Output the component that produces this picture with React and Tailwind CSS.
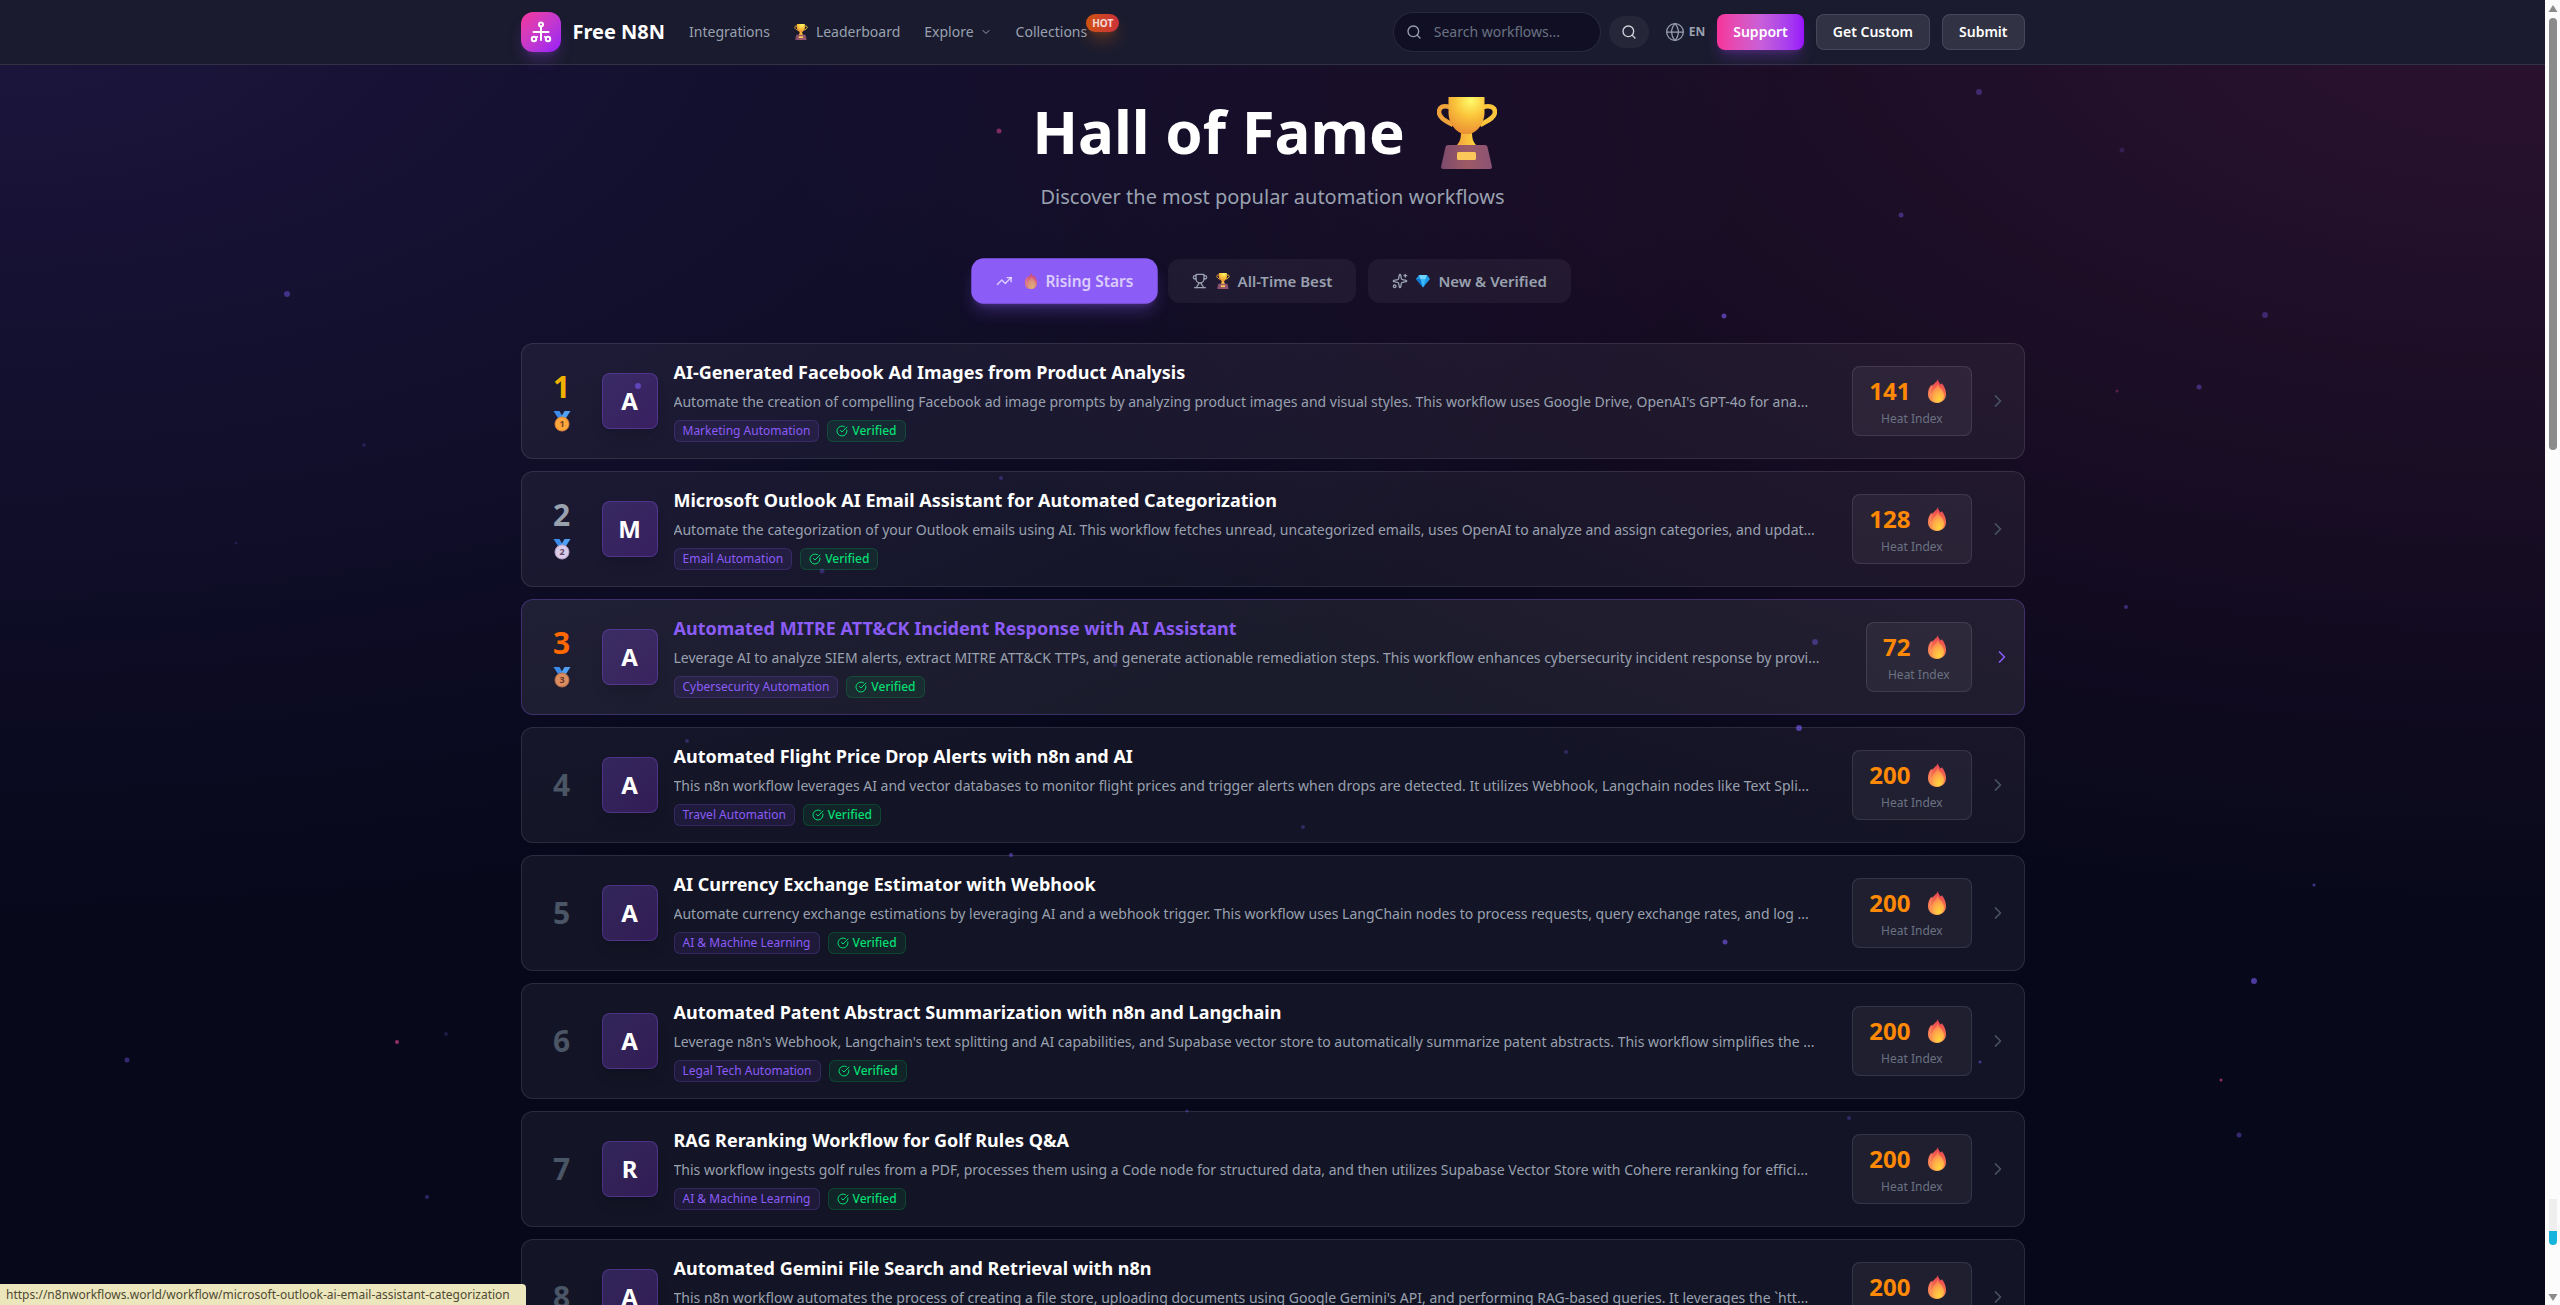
import { Search, Globe, ChevronDown, ChevronRight, TrendingUp, Trophy, Sparkles, CircleCheckBig } from 'lucide-react'

const workflows = [
  {
    title: 'AI-Generated Facebook Ad Images from Product Analysis',
    description: "Automate the creation of compelling Facebook ad image prompts by analyzing product images and visual styles. This workflow uses Google Drive, OpenAI's GPT-4o for ana...",
    category: 'Marketing Automation',
    heat: 141,
  },
  {
    title: 'Microsoft Outlook AI Email Assistant for Automated Categorization',
    description: 'Automate the categorization of your Outlook emails using AI. This workflow fetches unread, uncategorized emails, uses OpenAI to analyze and assign categories, and updat...',
    category: 'Email Automation',
    heat: 128,
  },
  {
    title: 'Automated MITRE ATT&CK Incident Response with AI Assistant',
    description: 'Leverage AI to analyze SIEM alerts, extract MITRE ATT&CK TTPs, and generate actionable remediation steps. This workflow enhances cybersecurity incident response by provi...',
    category: 'Cybersecurity Automation',
    heat: 72,
    active: true,
  },
  {
    title: 'Automated Flight Price Drop Alerts with n8n and AI',
    description: 'This n8n workflow leverages AI and vector databases to monitor flight prices and trigger alerts when drops are detected. It utilizes Webhook, Langchain nodes like Text Spli...',
    category: 'Travel Automation',
    heat: 200,
  },
  {
    title: 'AI Currency Exchange Estimator with Webhook',
    description: 'Automate currency exchange estimations by leveraging AI and a webhook trigger. This workflow uses LangChain nodes to process requests, query exchange rates, and log ...',
    category: 'AI & Machine Learning',
    heat: 200,
  },
  {
    title: 'Automated Patent Abstract Summarization with n8n and Langchain',
    description: "Leverage n8n's Webhook, Langchain's text splitting and AI capabilities, and Supabase vector store to automatically summarize patent abstracts. This workflow simplifies the ...",
    category: 'Legal Tech Automation',
    heat: 200,
  },
  {
    title: 'RAG Reranking Workflow for Golf Rules Q&A',
    description: 'This workflow ingests golf rules from a PDF, processes them using a Code node for structured data, and then utilizes Supabase Vector Store with Cohere reranking for effici...',
    category: 'AI & Machine Learning',
    heat: 200,
  },
  {
    title: 'Automated Gemini File Search and Retrieval with n8n',
    description: "This n8n workflow automates the process of creating a file store, uploading documents using Google Gemini's API, and performing RAG-based queries. It leverages the `htt...",
    category: 'AI & Machine Learning',
    heat: 200,
  },
]

const rankColors = ['text-[#f0b100]', 'text-[#99a1af]', 'text-[#ff6900]']

const medals = [
  { fill: '#fca63c', rim: '#e0853a', ink: '#7a3f22' },
  { fill: '#dccbe8', rim: '#b9a5c9', ink: '#5d4a6d' },
  { fill: '#d98d60', rim: '#b56d48', ink: '#6b3626' },
]

// x, y, radius, opacity, pink?
const particles = [
  [287, 294, 3, 0.45], [236, 543, 1.5, 0.2], [364, 445, 2, 0.2], [397, 1042, 2, 0.6, true],
  [446, 1034, 2, 0.2], [127, 1060, 2.5, 0.4], [427, 1197, 2, 0.35], [2122, 150, 2.5, 0.2],
  [2265, 315, 3, 0.35], [2199, 387, 2.5, 0.4], [2117, 391, 1.5, 0.3, true], [2126, 607, 2, 0.4],
  [2314, 885, 1.5, 0.5], [2254, 981, 3, 0.6], [2221, 1080, 1.5, 0.6, true], [2239, 1135, 2.5, 0.4],
  [999, 131, 2.5, 0.5, true], [1979, 92, 3, 0.35], [1901, 215, 2.5, 0.4], [1724, 316, 2.5, 0.6],
  [638, 386, 3, 0.6], [1001, 478, 2, 0.3], [822, 571, 2.5, 0.3], [1815, 642, 3, 0.4],
  [1115, 665, 2, 0.3], [1799, 728, 3, 0.6], [1566, 752, 2, 0.3], [1303, 827, 2, 0.3],
  [1011, 855, 2, 0.5], [1725, 942, 2.5, 0.6], [1980, 1062, 1.5, 0.5], [1187, 1111, 1.5, 0.4],
  [1849, 1118, 2, 0.3], [687, 741, 2, 0.3],
]

function TrophyArt({ className }) {
  return (
    <svg viewBox="0 0 60 72" className={className} aria-hidden="true">
      <defs>
        <radialGradient id="cup" cx="0.62" cy="0.1" r="0.95">
          <stop offset="0" stopColor="#fffb6b" />
          <stop offset="0.45" stopColor="#fbc53b" />
          <stop offset="1" stopColor="#e88a33" />
        </radialGradient>
        <linearGradient id="stem" x1="0" x2="1">
          <stop offset="0" stopColor="#f2a23a" />
          <stop offset="1" stopColor="#ffd640" />
        </linearGradient>
        <linearGradient id="base" x1="0" x2="1">
          <stop offset="0" stopColor="#7d4a6d" />
          <stop offset="0.5" stopColor="#9c5a66" />
          <stop offset="1" stopColor="#8c5374" />
        </linearGradient>
      </defs>
      <path d="M13 10C6 8 2 10 2 15c0 6 7 9 14 13" fill="none" stroke="#f0a33b" strokeWidth="4.5" />
      <path d="M46 10c7-2 12 0 12 5 0 6-8 9-15 13" fill="none" stroke="#fcc63c" strokeWidth="4.5" />
      <path d="M24 34h11c0 8 1 11 5 15H19c4-4 5-7 5-15z" fill="url(#stem)" />
      <path d="M11.500 0h36v16c0 9-6 18-14 21h-8c-8-3-14-12-14-21z" fill="url(#cup)" />
      <path d="M11 48h37q2 0 2.500 2l4.500 20q0 2-2 2H6q-2 0-2-2l4.500-20q.5-2 2.500-2z" fill="url(#base)" />
      <rect x="20" y="55" width="19" height="8" rx="1.500" fill="#fbc65a" />
    </svg>
  )
}

function FireArt({ className }) {
  return (
    <svg viewBox="0 0 18 24" className={className} aria-hidden="true">
      <defs>
        <linearGradient id="flame" x1="0.6" y1="0" x2="0.4" y2="1">
          <stop offset="0" stopColor="#e23b53" />
          <stop offset="0.5" stopColor="#f76f4e" />
          <stop offset="1" stopColor="#fb9a52" />
        </linearGradient>
        <radialGradient id="ember" cx="0.62" cy="0.85" r="0.75">
          <stop offset="0" stopColor="#ffd53e" />
          <stop offset="0.6" stopColor="#ffab4a" />
          <stop offset="1" stopColor="#fd7f50" />
        </radialGradient>
      </defs>
      <path d="M10 0c0 2 1 3.500 2.500 5.500C14 4.800 13.800 4 13.800 4 16 7 18 10.500 18 15c0 5.500-4 9-9 9s-9-3.500-9-9c0-4 1-6.500 3.500-9.500 0 1 .2 1.500.5 2C6 4 9 3 10 0z" fill="url(#flame)" />
      <path d="M9.500 5c1 3.500 6.500 6 6.500 11.500 0 4.500-2.800 7-6.500 7S3 21 3 17c0-6 5.500-7 6.500-12z" fill="url(#ember)" />
      <path d="M4.500 6C2 10 1.500 14 3 18" fill="none" stroke="#ffa08a" strokeWidth="0.6" />
    </svg>
  )
}

function GemArt() {
  return (
    <svg viewBox="0 0 14 14" className="size-3.5" aria-hidden="true">
      <path d="M3 1h8l3 4-7 8.500L0 5z" fill="#1f9bea" />
      <path d="M3 1h8l-1.500 4h-5z" fill="#6fd6ff" />
      <path d="M0 5h4.500L7 13.500z" fill="#1273cf" />
      <path d="M4.500 5h5L7 13.500z" fill="#3ab9fa" />
    </svg>
  )
}

function MedalArt({ place }) {
  const medal = medals[place - 1]
  return (
    <svg viewBox="0 0 20 24" className="h-6 w-5" aria-hidden="true">
      <path d="M1.500 2h6l4 7H6z" fill="#3b8bea" />
      <path d="M18.500 2h-6l-4 7H14z" fill="#4f9ff5" />
      <circle cx="10" cy="15" r="7" fill={medal.fill} stroke={medal.rim} />
      <text x="10" y="18" textAnchor="middle" fontSize="9" fontWeight="700" fill={medal.ink}>{place}</text>
    </svg>
  )
}

function Logo() {
  return (
    <span className="flex size-10 items-center justify-center rounded-xl bg-linear-to-br from-[#f6339a] to-[#9810fa] shadow-lg shadow-[#ad46ff]/25">
      <svg viewBox="0 0 24 24" className="size-6" fill="none" stroke="#fff" strokeWidth="2" aria-hidden="true">
        <circle cx="12" cy="4.500" r="2" />
        <path d="M12 6.500V20M4.500 12h15" strokeLinecap="round" />
        <circle cx="5" cy="19" r="2.200" />
        <circle cx="19" cy="19" r="2.200" />
        <path d="M7 17.500 9 16.500M17 17.500 15 16.500" strokeWidth="1.500" />
      </svg>
    </span>
  )
}

function Header() {
  return (
    <header className="relative shrink-0 border-b border-white/10 bg-[#1a1b2e]">
      <div className="mx-auto flex h-16 max-w-[1536px] items-center justify-between px-4">
        <div className="flex items-center gap-6 text-sm text-[#99a1af]">
          <a href="#home" className="flex items-center gap-3">
            <Logo />
            <span className="text-xl font-bold text-white">Free N8N</span>
          </a>
          <nav className="flex items-center gap-6">
            <a href="#integrations">Integrations</a>
            <a href="#leaderboard" className="flex items-center gap-2">
              <TrophyArt className="h-4 w-3.5" />
              Leaderboard
            </a>
            <button type="button" className="flex items-center gap-1.5">
              Explore
              <ChevronDown className="size-3" />
            </button>
            <a href="#collections" className="relative">
              Collections
              <span className="absolute -top-2 -right-8 rounded-full bg-linear-to-r from-[#cf5209] to-[#cc3038] px-1.5 py-0.5 text-[10px] leading-[14px] font-bold text-white/80 shadow-lg shadow-[#ff6900]/30">
                HOT
              </span>
            </a>
          </nav>
        </div>
        <div className="flex items-center gap-3">
          <form className="flex items-center gap-2">
            <div className="flex h-10 w-52 items-center gap-3 rounded-full border border-white/10 bg-[#110f24] px-3">
              <Search className="size-4 shrink-0 text-[#99a1af]" />
              <input
                type="text"
                aria-label="Search workflows"
                placeholder="Search workflows..."
                className="w-full bg-transparent text-sm text-white outline-none placeholder:text-[#6a7282]"
              />
            </div>
            <button type="submit" aria-label="Search" className="flex h-8 w-10 items-center justify-center rounded-full bg-white/5">
              <Search className="size-4 text-[#d1d5dc]" />
            </button>
          </form>
          <button type="button" className="flex items-center gap-1 pl-1 text-xs font-bold text-[#99a1af]">
            <Globe className="size-5" strokeWidth={1.5} />
            EN
          </button>
          <button type="button" className="h-9 rounded-lg bg-linear-to-r from-[#f6339a] via-[#c95fd8] to-[#9810fa] px-4 text-sm font-semibold text-white shadow-lg shadow-[#ad46ff]/25">
            Support
          </button>
          <button type="button" className="h-9 rounded-lg border border-white/10 bg-white/10 px-4 text-sm font-semibold text-white">
            Get Custom
          </button>
          <button type="button" className="h-9 rounded-lg border border-white/10 bg-white/10 px-4 text-sm font-semibold text-white">
            Submit
          </button>
        </div>
      </div>
    </header>
  )
}

function Tabs() {
  return (
    <div className="mt-12 flex justify-center gap-3 text-[15px] font-semibold text-[#99a1af]">
      <button type="button" className="flex h-11 scale-[1.03] items-center gap-2 rounded-xl bg-[#8b5cf6] px-6 text-white/70 shadow-lg shadow-[#8b5cf6]/30">
        <TrendingUp className="size-4" />
        <FireArt className="ml-1 h-4 w-3 opacity-70" />
        Rising Stars
      </button>
      <button type="button" className="flex h-11 items-center gap-2 rounded-xl bg-white/5 px-6">
        <Trophy className="size-4" />
        <TrophyArt className="h-4 w-3.5" />
        All-Time Best
      </button>
      <button type="button" className="flex h-11 items-center gap-2 rounded-xl bg-white/5 px-6">
        <Sparkles className="size-4" />
        <GemArt />
        New &amp; Verified
      </button>
    </div>
  )
}

function WorkflowCard({ workflow, rank }) {
  const { title, description, category, heat, active } = workflow
  return (
    <a
      href="#workflow"
      className={`flex items-center gap-4 rounded-xl border p-4 ${active ? 'border-[#8b5cf6]/30 bg-white/8' : 'border-white/10 bg-white/5'}`}
    >
      <div className="flex w-12 shrink-0 flex-col items-center gap-1">
        <span className={`text-3xl leading-9 font-bold ${rankColors[rank - 1] ?? 'text-[#4a5565]'}`}>{rank}</span>
        {rank <= 3 && <MedalArt place={rank} />}
      </div>
      <div className="flex size-14 shrink-0 items-center justify-center rounded-lg border border-[#8b5cf6]/30 bg-linear-to-br from-[#8b5cf6]/25 to-[#9333ea]/25 text-2xl font-bold text-white shadow-lg">
        {title[0]}
      </div>
      <div className="min-w-0 flex-1">
        <h2 className={`text-lg leading-6 font-bold ${active ? 'text-[#8b5cf6]' : 'text-white'}`}>{title}</h2>
        <p className="mt-2 overflow-hidden text-sm leading-5 whitespace-nowrap text-[#99a1af]">{description}</p>
        <div className="mt-2 flex gap-2 text-xs leading-4">
          <span className="rounded-md border border-[#8b5cf6]/20 bg-[#8b5cf6]/10 px-2 py-0.5 text-[#8b5cf6]">{category}</span>
          <span className="flex items-center gap-1 rounded-md border border-[#00c950]/20 bg-[#00c950]/10 px-2 py-0.5 font-medium text-[#05df72]">
            <CircleCheckBig className="size-3" />
            Verified
          </span>
        </div>
      </div>
      <div className="shrink-0 rounded-lg border border-white/10 bg-white/5 px-4 py-2 text-center">
        <div className="flex items-center gap-2 text-2xl leading-8 font-bold text-[#ff8904]">
          {heat}
          <span className="flex w-9 justify-center">
            <FireArt className="h-6 w-[18px]" />
          </span>
        </div>
        <div className="mt-1 text-xs leading-4 text-[#6a7282]">Heat Index</div>
      </div>
      <ChevronRight className={`size-5 shrink-0 ${active ? 'translate-x-1 text-[#8b5cf6]' : 'text-[#4a5565]'}`} />
    </a>
  )
}

function Particles() {
  return (
    <svg className="pointer-events-none absolute inset-0 size-full" aria-hidden="true">
      {particles.map(([x, y, r, opacity, pink]) => (
        <circle key={`${x}-${y}`} cx={x} cy={y} r={r} fill={pink ? '#ec4899' : '#7c5cf6'} opacity={opacity} />
      ))}
    </svg>
  )
}

function Scrollbar() {
  return (
    <div className="flex w-[15px] shrink-0 flex-col items-center bg-[#fcfcfc] py-1" aria-hidden="true">
      <svg viewBox="0 0 10 8" className="h-2 w-2.5"><path d="M5 1 9.500 8H.5z" fill="#8b8b8b" /></svg>
      <div className="mt-1.5 h-1/3 w-2 rounded-full bg-[#8b8b8b]" />
      <div className="flex-1" />
      <div className="h-8 w-2 bg-[#efefef]" />
      <div className="h-3.5 w-2 rounded-b-full bg-[#17b4dd]" />
      <svg viewBox="0 0 10 8" className="mt-12 h-2 w-2.5"><path d="M5 8 9.500 1H.5z" fill="#8b8b8b" /></svg>
    </div>
  )
}

export default function App() {
  return (
    <div className="flex h-screen overflow-hidden font-['Noto_Sans','Open_Sans',sans-serif]">
      <div className="relative flex min-w-0 flex-1 flex-col overflow-hidden bg-[#07081a] bg-[radial-gradient(at_0%_0%,rgba(139,92,246,0.16)_0px,transparent_50%),radial-gradient(at_100%_0%,rgba(236,72,153,0.16)_0px,transparent_50%)]">
        <Header />
        <main className="mx-auto w-full max-w-[1536px] px-4 pt-8">
          <div className="text-center">
            <h1 className="flex items-start justify-center gap-8 text-6xl leading-[68px] font-bold text-white">
              Hall of Fame
              <TrophyArt className="mr-4 h-[72px] w-[60px]" />
            </h1>
            <p className="mt-3.5 text-xl leading-7 text-[#99a1af]">Discover the most popular automation workflows</p>
          </div>
          <Tabs />
          <div className="mt-10 flex flex-col gap-3 pb-12">
            {workflows.map((workflow, i) => (
              <WorkflowCard key={workflow.title} workflow={workflow} rank={i + 1} />
            ))}
          </div>
        </main>
        <Particles />
        <div className="absolute bottom-0 left-0 rounded-tr bg-[#ece6bd] pr-4 pl-1.5 text-xs leading-[21px] text-[#4f4a33]">
          https://n8nworkflows.world/workflow/microsoft-outlook-ai-email-assistant-categorization
        </div>
      </div>
      <Scrollbar />
    </div>
  )
}
